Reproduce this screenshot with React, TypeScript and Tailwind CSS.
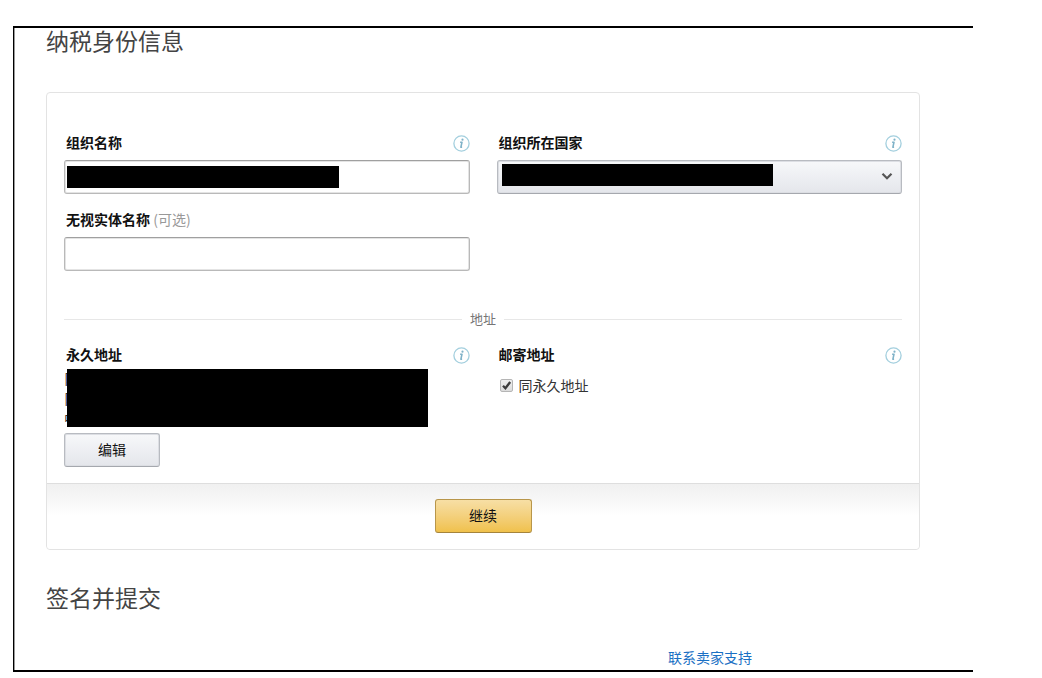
import { useState } from "react";
import type { ReactNode } from "react";

const addressLines = ["阝", "阝", "中"];

function InfoIcon() {
  return (
    <button type="button" aria-label="说明" className="size-[17px] cursor-pointer self-center">
      <svg viewBox="0 0 17 17" className="size-full" fill="none">
        <circle cx="8.5" cy="8.5" r="7.6" stroke="#a3cfde" strokeWidth="1.3" />
        <circle cx="9.5" cy="4.7" r="1.1" fill="#7fb2c8" />
        <path
          d="M7.1 7.2h1.9L7.9 12.2h1.2"
          stroke="#7fb2c8"
          strokeWidth="1.6"
          strokeLinejoin="round"
        />
      </svg>
    </button>
  );
}

function FieldHeader({ children, info }: { children: ReactNode; info?: boolean }) {
  return (
    <div className="flex h-5 items-start justify-between pl-0.5 leading-[18px]">
      {children}
      {info && <InfoIcon />}
    </div>
  );
}

const headingClass = "text-[23px] leading-6 font-normal text-[#444]";

const inputClass =
  "block h-[34px] w-full rounded-[3px] border border-[#b9b9b9] border-t-[#a0a0a0] bg-white px-2 shadow-[inset_0_0_0_1px_#e4e4e4] outline-none focus:border-[#e77600]";

export default function App() {
  const [sameAddress, setSameAddress] = useState(true);

  return (
    <div className="pt-[26px] pl-[13px] pr-[69px] font-['Noto_Sans_CJK_SC','Noto_Sans_CJK_TC',sans-serif] text-sm text-[#111]">
      <main className="border-y-2 border-l border-black pr-[53px] pl-8 shadow-[inset_1px_0_0_#999]">
        <h1 className={headingClass}>纳税身份信息</h1>

        <form
          className="mt-10 rounded border border-[#e3e3e3]"
          onSubmit={(e) => e.preventDefault()}
        >
          <div className="px-[17px] pt-10 pb-4">
            <div className="grid grid-cols-2 gap-x-[27px] gap-y-4">
              <div>
                <FieldHeader info>
                  <label htmlFor="org-name" className="font-bold">组织名称</label>
                </FieldHeader>
                <div className="relative mt-[7px]">
                  <input id="org-name" type="text" className={inputClass} />
                  <span className="pointer-events-none absolute top-1.5 left-[3px] h-[22px] w-[67%] bg-black" />
                </div>
              </div>

              <div>
                <FieldHeader info>
                  <label htmlFor="org-country" className="font-bold">组织所在国家</label>
                </FieldHeader>
                <div className="relative mt-[7px]">
                  <select
                    id="org-country"
                    className="block h-[34px] w-full appearance-none rounded-[3px] border border-[#b8bbc1] border-b-[#a5a8ae] bg-linear-to-b from-[#f7f8fa] to-[#e4e6eb] px-2 shadow-[inset_0_0_0_1px_#dcdee3] outline-none"
                  >
                    <option value="" />
                  </select>
                  <span className="pointer-events-none absolute top-1 left-[5px] h-[22px] w-[67%] bg-black" />
                  <svg
                    viewBox="0 0 12 9"
                    className="pointer-events-none absolute top-3 right-[9px] h-[9px] w-3"
                    fill="none"
                  >
                    <path d="M1.5 1.8 6 6.3l4.5-4.5" stroke="#555" strokeWidth="2.2" />
                  </svg>
                </div>
              </div>

              <div>
                <FieldHeader>
                  <label htmlFor="entity-name" className="font-bold">
                    无视实体名称 <span className="font-normal text-[#999]">(可选)</span>
                  </label>
                </FieldHeader>
                <div className="mt-[7px]">
                  <input id="entity-name" type="text" className={inputClass} />
                </div>
              </div>
            </div>

            <div className="mt-[38px] flex items-center gap-2 text-[13px] leading-5 text-[#767676]">
              <span className="h-px flex-1 bg-[#e7e7e7]" />
              地址
              <span className="h-px flex-1 bg-[#e7e7e7]" />
            </div>

            <div className="mt-4 grid grid-cols-2 gap-x-[27px]">
              <div>
                <FieldHeader info>
                  <h2 className="font-bold">永久地址</h2>
                </FieldHeader>
                <div className="relative mt-1 leading-[18px] text-[#333]">
                  {addressLines.map((line, i) => (
                    <p key={i} className="h-5">{line}</p>
                  ))}
                  <span className="absolute top-0 left-[3px] h-[58px] w-[89%] bg-black" />
                </div>
                <button
                  type="button"
                  className="mt-1 h-[34px] w-24 cursor-pointer rounded-[3px] border border-[#b8bbc1] border-b-[#a5a8ae] bg-linear-to-b from-[#f7f8fa] to-[#e4e6eb] pb-0.5 shadow-[inset_0_0_0_1px_#dcdee3]"
                >
                  编辑
                </button>
              </div>

              <div>
                <FieldHeader info>
                  <h2 className="font-bold">邮寄地址</h2>
                </FieldHeader>
                <label className="mt-2.5 ml-[3px] flex items-center gap-1.5 leading-5 text-[#333]">
                  <span className="relative size-[13px]">
                    <input
                      type="checkbox"
                      checked={sameAddress}
                      onChange={(e) => setSameAddress(e.target.checked)}
                      className="peer block size-[13px] appearance-none rounded-xs border border-[#b5b5b5] bg-linear-to-b from-[#eee] to-[#dcdcdc]"
                    />
                    <svg
                      viewBox="0 0 13 13"
                      className="pointer-events-none absolute inset-0 hidden size-[13px] peer-checked:block"
                      fill="none"
                    >
                      <path d="M3 6.8 5.4 9.2 10.2 3" stroke="#3c3c3c" strokeWidth="2.3" />
                    </svg>
                  </span>
                  同永久地址
                </label>
              </div>
            </div>
          </div>

          <div className="flex justify-center rounded-b border-t border-[#dedede] bg-linear-to-b from-[#f0f0f0] to-white to-[32px] pt-[15px] pb-4">
            <button
              type="submit"
              className="h-[34px] w-[97px] cursor-pointer rounded-[3px] border border-[#b8964a] border-b-[#a5843c] bg-linear-to-b from-[#f7dfa5] to-[#f0c14b] pb-0.5"
            >
              继续
            </button>
          </div>
        </form>

        <h1 className={`${headingClass} mt-[35px]`}>签名并提交</h1>

        <div className="mt-[38px] flex justify-end pr-[168px] pb-[3px] leading-5">
          <a href="#support" className="text-[#1a70c4] hover:underline">联系卖家支持</a>
        </div>
      </main>
    </div>
  );
}
